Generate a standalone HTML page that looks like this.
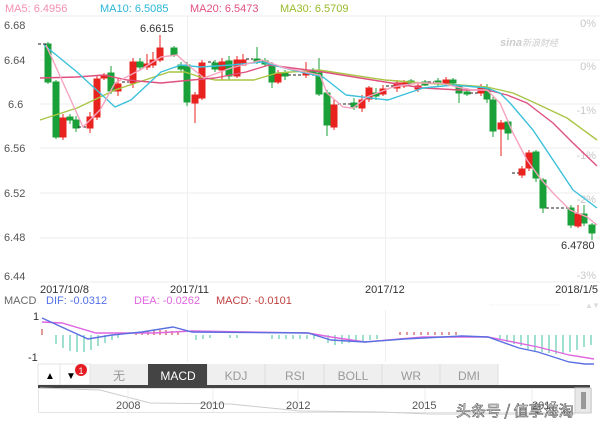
<!DOCTYPE html>
<html><head><meta charset="utf-8"><style>
body{margin:0;background:#fff;width:600px;height:427px;overflow:hidden;font-family:"Liberation Sans","Noto Sans CJK SC",sans-serif}
svg{position:absolute;left:0;top:0}
</style></head><body>
<svg width="600" height="427" viewBox="0 0 600 427" font-family="Liberation Sans, Noto Sans CJK SC, sans-serif">
<!-- legend -->
<text x="5" y="12" font-size="11" fill="#f48fb1">MA5: 6.4956</text>
<text x="100" y="12" font-size="11" fill="#29b6d6">MA10: 6.5085</text>
<text x="190" y="12" font-size="11" fill="#e0507f">MA20: 6.5473</text>
<text x="280" y="12" font-size="11" fill="#9aba2a">MA30: 6.5709</text>
<!-- grid -->
<g stroke="#eeeeee" stroke-width="1">
<line x1="40" y1="16" x2="600" y2="16"/>
<line x1="40" y1="60" x2="600" y2="60"/>
<line x1="40" y1="104" x2="600" y2="104"/>
<line x1="40" y1="148" x2="600" y2="148"/>
<line x1="40" y1="193" x2="600" y2="193"/>
<line x1="40" y1="238" x2="600" y2="238"/>
<line x1="40" y1="282" x2="600" y2="282"/>
<line x1="187.5" y1="16" x2="187.5" y2="282"/>
<line x1="385.5" y1="16" x2="385.5" y2="282"/>
<line x1="187.5" y1="310" x2="187.5" y2="362"/>
<line x1="385.5" y1="310" x2="385.5" y2="362"/>
</g>
<g font-size="11" fill="#555">
<text x="4" y="29">6.68</text><text x="4" y="64">6.64</text><text x="8" y="108">6.6</text>
<text x="4" y="152">6.56</text><text x="4" y="197">6.52</text><text x="4" y="241">6.48</text><text x="4" y="280">6.44</text>
</g>
<g font-size="11" fill="#c8c8c8" text-anchor="end">
<text x="596" y="27">0%</text><text x="596" y="70">0%</text><text x="596" y="114">-1%</text>
<text x="596" y="159">-1%</text><text x="596" y="203">-2%</text><text x="596" y="279">-3%</text>
</g>
<text x="500" y="46" font-size="11" fill="#ccc" font-style="italic" font-weight="bold">sina<tspan font-weight="normal" font-size="9">新浪财经</tspan></text>
<text x="140" y="32" font-size="11" fill="#333">6.6615</text>
<text x="561" y="249" font-size="11" fill="#333">6.4780</text>
<!-- candles -->
<g stroke-width="1">
<g fill="#1aa038" stroke="#1aa038">
<line x1="48" y1="42" x2="48" y2="84"/><rect x="45" y="44" width="6" height="38"/>
<line x1="56" y1="80" x2="56" y2="139"/><rect x="53" y="82" width="6" height="55"/>
<line x1="70" y1="114" x2="70" y2="124"/><rect x="67" y="117" width="6" height="3"/>
<line x1="76" y1="116" x2="76" y2="132"/><rect x="73" y="120" width="6" height="8"/>
<line x1="111" y1="66" x2="111" y2="94"/><rect x="108" y="73" width="6" height="18"/>
<line x1="140" y1="58" x2="140" y2="70"/><rect x="137" y="62" width="6" height="5"/>
<line x1="174" y1="46" x2="174" y2="57"/><rect x="171" y="48" width="6" height="7"/>
<line x1="181" y1="62" x2="181" y2="72"/><rect x="178" y="65" width="6" height="4"/>
<line x1="187" y1="62" x2="187" y2="106"/><rect x="184" y="65" width="6" height="37"/>
<line x1="215" y1="60" x2="215" y2="72"/><rect x="212" y="63" width="6" height="6"/>
<line x1="229" y1="56" x2="229" y2="80"/><rect x="226" y="61" width="6" height="15"/>
<line x1="257" y1="47" x2="257" y2="64"/><rect x="254" y="59" width="6" height="3"/>
<line x1="265" y1="58" x2="265" y2="66"/><rect x="262" y="61" width="6" height="3"/>
<line x1="272" y1="62" x2="272" y2="88"/><rect x="269" y="66" width="6" height="16"/>
<line x1="285" y1="70" x2="285" y2="80"/><rect x="282" y="73" width="6" height="3"/>
<line x1="313" y1="68" x2="313" y2="76"/><rect x="310" y="70" width="6" height="3"/>
<line x1="319" y1="58" x2="319" y2="96"/><rect x="316" y="73" width="6" height="21"/>
<line x1="327" y1="90" x2="327" y2="136"/><rect x="324" y="93" width="6" height="32"/>
<line x1="354" y1="98" x2="354" y2="110"/><rect x="351" y="103" width="6" height="4"/>
<line x1="376" y1="88" x2="376" y2="100"/><rect x="373" y="93" width="6" height="3"/>
<line x1="411" y1="79" x2="411" y2="84"/><rect x="408" y="81" width="6" height="3"/>
<line x1="425" y1="80" x2="425" y2="86"/><rect x="422" y="82" width="6" height="3"/>
<line x1="438" y1="78" x2="438" y2="86"/><rect x="435" y="81" width="6" height="3"/>
<line x1="453" y1="78" x2="453" y2="86"/><rect x="450" y="80" width="6" height="3"/>
<line x1="459" y1="84" x2="459" y2="103"/><rect x="456" y="86" width="6" height="7"/>
<line x1="467" y1="89" x2="467" y2="96"/><rect x="464" y="92" width="6" height="2"/>
<line x1="487" y1="84" x2="487" y2="103"/><rect x="484" y="88" width="6" height="11"/>
<line x1="493" y1="97" x2="493" y2="137"/><rect x="490" y="100" width="6" height="31"/>
<line x1="508" y1="120" x2="508" y2="140"/><rect x="505" y="122" width="6" height="11"/>
<line x1="536" y1="150" x2="536" y2="182"/><rect x="533" y="152" width="6" height="26"/>
<line x1="543" y1="178" x2="543" y2="213"/><rect x="540" y="180" width="6" height="28"/>
<line x1="571" y1="205" x2="571" y2="228"/><rect x="568" y="208" width="6" height="17"/>
<line x1="584" y1="205" x2="584" y2="226"/><rect x="581" y="214" width="6" height="9"/>
<line x1="592" y1="223" x2="592" y2="240"/><rect x="589" y="225" width="6" height="8"/>
</g>
<g fill="#e8221e" stroke="#e8221e">
<line x1="63" y1="114" x2="63" y2="140"/><rect x="60" y="118" width="6" height="19"/>
<line x1="90" y1="112" x2="90" y2="133"/><rect x="87" y="117" width="6" height="11"/>
<line x1="97" y1="76" x2="97" y2="120"/><rect x="94" y="79" width="6" height="38"/>
<line x1="104" y1="73" x2="104" y2="80"/><rect x="101" y="75" width="6" height="3"/>
<line x1="118" y1="78" x2="118" y2="96"/><rect x="115" y="84" width="6" height="7"/>
<line x1="133" y1="58" x2="133" y2="88"/><rect x="130" y="62" width="6" height="21"/>
<line x1="147" y1="54" x2="147" y2="70"/><rect x="144" y="64" width="6" height="3"/>
<line x1="153" y1="52" x2="153" y2="68"/><rect x="150" y="60" width="6" height="5"/>
<line x1="160" y1="35" x2="160" y2="62"/><rect x="157" y="48" width="6" height="12"/>
<line x1="195" y1="92" x2="195" y2="123"/><rect x="192" y="95" width="6" height="8"/>
<line x1="202" y1="60" x2="202" y2="100"/><rect x="199" y="63" width="6" height="35"/>
<line x1="222" y1="58" x2="222" y2="80"/><rect x="219" y="62" width="6" height="8"/>
<line x1="237" y1="56" x2="237" y2="78"/><rect x="234" y="60" width="6" height="16"/>
<line x1="243" y1="54" x2="243" y2="66"/><rect x="240" y="60" width="6" height="5"/>
<line x1="278" y1="70" x2="278" y2="84"/><rect x="275" y="74" width="6" height="8"/>
<line x1="306" y1="62" x2="306" y2="78"/><rect x="303" y="71" width="6" height="4"/>
<line x1="334" y1="100" x2="334" y2="130"/><rect x="331" y="105" width="6" height="22"/>
<line x1="362" y1="95" x2="362" y2="112"/><rect x="359" y="100" width="6" height="8"/>
<line x1="369" y1="86" x2="369" y2="102"/><rect x="366" y="88" width="6" height="11"/>
<line x1="383" y1="85" x2="383" y2="96"/><rect x="380" y="89" width="6" height="5"/>
<line x1="397" y1="80" x2="397" y2="92"/><rect x="394" y="83" width="6" height="5"/>
<line x1="404" y1="80" x2="404" y2="88"/><rect x="401" y="83" width="6" height="3"/>
<line x1="418" y1="82" x2="418" y2="92"/><rect x="415" y="86" width="6" height="3"/>
<line x1="446" y1="77" x2="446" y2="86"/><rect x="443" y="80" width="6" height="3"/>
<line x1="481" y1="84" x2="481" y2="96"/><rect x="478" y="87" width="6" height="6"/>
<line x1="501" y1="120" x2="501" y2="156"/><rect x="498" y="123" width="6" height="6"/>
<line x1="522" y1="166" x2="522" y2="178"/><rect x="519" y="169" width="6" height="6"/>
<line x1="529" y1="150" x2="529" y2="171"/><rect x="526" y="153" width="6" height="15"/>
<line x1="578" y1="205" x2="578" y2="228"/><rect x="575" y="214" width="6" height="12"/>
</g>
<g stroke="#222" stroke-dasharray="3,2">
<line x1="38" y1="44" x2="46" y2="44"/><line x1="78" y1="127" x2="86" y2="127"/>
<line x1="122" y1="82" x2="129" y2="82"/><line x1="208" y1="62" x2="214" y2="62"/>
<line x1="246" y1="59" x2="253" y2="59"/><line x1="288" y1="75" x2="302" y2="75"/>
<line x1="338" y1="104" x2="352" y2="104"/><line x1="386" y1="86" x2="394" y2="86"/>
<line x1="428" y1="82" x2="434" y2="82"/><line x1="470" y1="93" x2="478" y2="93"/>
<line x1="512" y1="173" x2="519" y2="173"/><line x1="546" y1="208" x2="568" y2="208"/>
</g>
</g>
<!-- MAs -->
<g fill="none" stroke-width="1.4" stroke-linejoin="round">
<polyline stroke="#a9c545" points="40,120 77,108 115,90 154,77 169,72 185,72 200,77 215,80 254,80 277,73 319,70 385,80 423,83 460,85 487,87 513,93 533,102 567,118 597,140"/>
<polyline stroke="#e0507f" points="40,78 77,77 104,75 127,80 161,83 192,80 215,78 246,72 269,65 292,68 323,72 385,82 423,88 460,90 487,90 507,95 527,103 553,123 573,143 597,166"/>
<polyline stroke="#3cc0dc" points="44,45 77,72 115,107 131,100 161,72 181,65 200,67 231,65 262,62 292,70 323,77 346,95 388,100 423,88 454,85 487,88 500,93 510,103 533,130 553,160 573,190 597,208"/>
<polyline stroke="#f5a3bf" points="46,45 83,127 100,110 115,83 140,70 161,57 177,55 188,65 204,78 231,68 262,60 285,68 320,75 327,93 343,107 353,108 367,97 380,92 393,87 417,83 440,83 457,87 473,90 487,90 500,103 513,133 527,160 540,178 553,193 570,210 587,217 597,225"/>
</g>
<!-- dates -->
<g font-size="11" fill="#333">
<text x="40" y="293">2017/10/8</text><text x="170" y="293">2017/11</text><text x="365" y="293">2017/12</text>
<text x="598" y="293" text-anchor="end">2018/1/5</text>
</g>
<!-- MACD legend -->
<text x="4" y="304" font-size="11" fill="#666">MACD</text>
<text x="46" y="304" font-size="11" fill="#5470e8">DIF: -0.0312</text>
<text x="134" y="304" font-size="11" fill="#e066e0">DEA: -0.0262</text>
<text x="216" y="304" font-size="11" fill="#c04040">MACD: -0.0101</text>
<text x="585" y="308" font-size="8" fill="#ddd">▲</text><text x="592" y="308" font-size="8" fill="#ddd">▼</text>
<line x1="490" y1="305" x2="560" y2="305" stroke="#eee" stroke-dasharray="1,1"/>
<text x="33" y="320" font-size="11" fill="#333">1</text>
<text x="28" y="361" font-size="11" fill="#333">-1</text>
<!-- histogram -->
<g stroke-width="1">
<g stroke="#c03030">
<line x1="42" y1="329" x2="42" y2="335"/><line x1="136" y1="333" x2="136" y2="335"/><line x1="142" y1="332" x2="142" y2="335"/><line x1="148" y1="331" x2="148" y2="335"/><line x1="154" y1="330" x2="154" y2="335"/><line x1="160" y1="330" x2="160" y2="335"/><line x1="166" y1="330" x2="166" y2="335"/><line x1="172" y1="331" x2="172" y2="335"/><line x1="178" y1="332" x2="178" y2="335"/>
<line x1="400" y1="332" x2="400" y2="335"/><line x1="407" y1="332" x2="407" y2="335"/><line x1="414" y1="332" x2="414" y2="335"/><line x1="421" y1="332" x2="421" y2="335"/><line x1="428" y1="332" x2="428" y2="335"/><line x1="435" y1="332" x2="435" y2="335"/><line x1="442" y1="332" x2="442" y2="335"/><line x1="449" y1="332" x2="449" y2="335"/><line x1="456" y1="332" x2="456" y2="335"/>
</g>
<g stroke="#40c0a0">
<line x1="56" y1="335" x2="56" y2="344"/><line x1="63" y1="335" x2="63" y2="348"/><line x1="70" y1="335" x2="70" y2="351"/><line x1="77" y1="335" x2="77" y2="352"/><line x1="84" y1="335" x2="84" y2="352"/><line x1="91" y1="335" x2="91" y2="350"/><line x1="98" y1="335" x2="98" y2="346"/><line x1="105" y1="335" x2="105" y2="343"/><line x1="112" y1="335" x2="112" y2="340"/><line x1="118" y1="335" x2="118" y2="338"/>
<line x1="196" y1="335" x2="196" y2="340"/><line x1="203" y1="335" x2="203" y2="339"/><line x1="210" y1="335" x2="210" y2="338"/><line x1="230" y1="335" x2="230" y2="338"/><line x1="237" y1="335" x2="237" y2="338"/>
<line x1="272" y1="335" x2="272" y2="339"/><line x1="279" y1="335" x2="279" y2="339"/><line x1="286" y1="335" x2="286" y2="339"/><line x1="293" y1="335" x2="293" y2="339"/><line x1="300" y1="335" x2="300" y2="339"/><line x1="307" y1="335" x2="307" y2="339"/><line x1="314" y1="335" x2="314" y2="339"/>
<line x1="328" y1="335" x2="328" y2="343"/><line x1="335" y1="335" x2="335" y2="345"/><line x1="342" y1="335" x2="342" y2="344"/><line x1="349" y1="335" x2="349" y2="343"/><line x1="356" y1="335" x2="356" y2="342"/><line x1="363" y1="335" x2="363" y2="341"/><line x1="370" y1="335" x2="370" y2="340"/><line x1="377" y1="335" x2="377" y2="339"/>
<line x1="500" y1="335" x2="500" y2="340"/><line x1="507" y1="335" x2="507" y2="342"/><line x1="514" y1="335" x2="514" y2="344"/><line x1="521" y1="335" x2="521" y2="346"/><line x1="528" y1="335" x2="528" y2="349"/><line x1="535" y1="335" x2="535" y2="351"/><line x1="542" y1="335" x2="542" y2="352"/><line x1="549" y1="335" x2="549" y2="353"/><line x1="556" y1="335" x2="556" y2="354"/><line x1="563" y1="335" x2="563" y2="353"/><line x1="570" y1="335" x2="570" y2="352"/><line x1="577" y1="335" x2="577" y2="350"/><line x1="584" y1="335" x2="584" y2="347"/><line x1="591" y1="335" x2="591" y2="345"/>
</g>
</g>
<g fill="none" stroke-width="1.4">
<polyline stroke="#e066e0" points="42,322 62,323 96,333 154,333 192,331 308,333 331,337 365,342 423,337 488,337 538,347 569,355 594,359"/>
<polyline stroke="#5a70e0" points="42,318 88,339 112,335 142,332 173,327 192,332 308,333 331,340 365,342 404,339 462,336 488,337 519,348 538,352 569,362 585,364 594,364"/>
</g>
<!-- toolbar -->
<rect x="38" y="364" width="460" height="21" fill="#efefef"/>
<rect x="38" y="364" width="52" height="21" fill="#fff" stroke="#e4e4e4"/>
<line x1="60" y1="364" x2="60" y2="385" stroke="#e4e4e4"/>
<g stroke="#dcdcdc"><line x1="149" y1="364" x2="149" y2="385"/><line x1="207" y1="364" x2="207" y2="385"/><line x1="265" y1="364" x2="265" y2="385"/><line x1="324" y1="364" x2="324" y2="385"/><line x1="382" y1="364" x2="382" y2="385"/><line x1="440" y1="364" x2="440" y2="385"/><line x1="498" y1="364" x2="498" y2="385"/></g>
<rect x="148" y="364" width="59" height="21" fill="#444"/>
<text x="45" y="379" font-size="10" fill="#000">▲</text>
<text x="66" y="379" font-size="10" fill="#000">▼</text>
<circle cx="81" cy="370" r="6" fill="#e51c23"/><text x="81" y="374" font-size="9" fill="#fff" text-anchor="middle">1</text>
<g font-size="12" fill="#999" text-anchor="middle">
<text x="119" y="380">无</text><text x="178" y="380" fill="#fff">MACD</text><text x="236" y="380">KDJ</text><text x="295" y="380">RSI</text><text x="353" y="380">BOLL</text><text x="411" y="380">WR</text><text x="469" y="380">DMI</text>
</g>
<!-- navigator -->
<rect x="38" y="385" width="552" height="3" fill="#444"/>
<rect x="38.5" y="388.5" width="553" height="24" fill="#fff" stroke="#e4e4e4"/>
<polyline fill="none" stroke="#ccc" points="40,388 100,390 150,403 230,404 300,411 380,412 430,414 500,414 575,414"/>
<g stroke="#eee"><line x1="128" y1="389" x2="128" y2="412"/><line x1="213" y1="389" x2="213" y2="412"/><line x1="298" y1="389" x2="298" y2="412"/><line x1="425" y1="389" x2="425" y2="412"/><line x1="532" y1="389" x2="532" y2="412"/></g>
<rect x="575" y="388" width="16" height="25" fill="#e8e8e8" stroke="#ccc"/>
<rect x="581" y="392" width="5" height="17" fill="#999"/>
<g font-size="11" fill="#555">
<text x="116" y="409">2008</text><text x="200" y="409">2010</text><text x="286" y="409">2012</text><text x="412" y="409">2015</text><text x="532" y="409">2017</text>
</g>
<text x="456" y="416" font-size="15" fill="#fff" stroke="#555" stroke-width="0.6" font-family="Noto Sans CJK SC, sans-serif">头条号 / 值享海淘</text>
</svg>
</body></html>
